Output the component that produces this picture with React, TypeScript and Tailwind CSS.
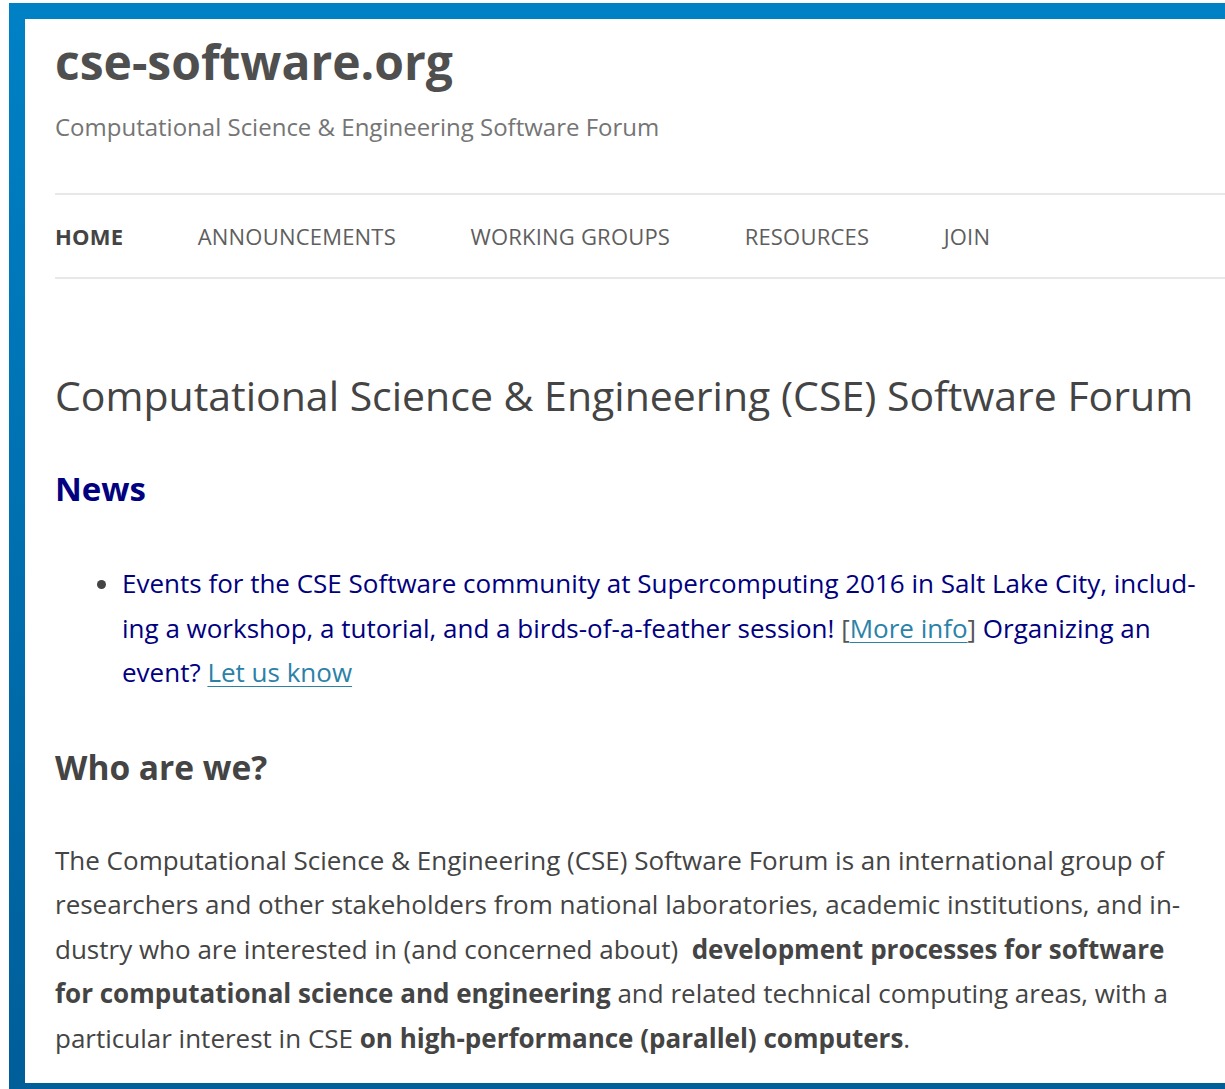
import React from "react";

const font = { fontFamily: '"Open Sans", "Noto Sans", sans-serif' };

function NavItem({ label, active }: { label: string; active?: boolean }) {
  return (
    <span
      className={
        active
          ? "text-[22px] font-bold text-[#444444] tracking-[0.2px]"
          : "text-[22px] text-[#5e5e5e] tracking-[0.2px]"
      }
    >
      {label}
    </span>
  );
}

export default function App() {
  return (
    <div className="h-[1089px] overflow-hidden bg-white pt-[3px] pl-[9px]" style={font}>
      <div className="h-[1086px] bg-gradient-to-b from-[#0081c6] to-[#005e99] pt-[16px] pl-[16px]">
        <div className="h-[1064px] overflow-hidden bg-white pl-[30px]">
          <header className="flex flex-col">
            <h1 className="mt-[14px] text-[48px] leading-[58px] font-bold text-[#4f4f4f] whitespace-nowrap">
              cse-software.org
            </h1>
            <p className="mt-[20px] text-[24px] leading-[32px] text-[#757575] whitespace-nowrap">
              Computational Science &amp; Engineering Software Forum
            </p>
          </header>

          <nav className="mt-[50px] border-y-2 border-[#e8e8e8] h-[86px] flex items-center gap-[74.5px] whitespace-nowrap">
            <NavItem label="HOME" active />
            <NavItem label="ANNOUNCEMENTS" />
            <NavItem label="WORKING GROUPS" />
            <NavItem label="RESOURCES" />
            <NavItem label="JOIN" />
          </nav>

          <main className="flex flex-col whitespace-nowrap">
            <h2 className="mt-[90px] text-[41px] leading-[52px] text-[#444444]">
              Computational Science &amp; Engineering (CSE) Software Forum
            </h2>

            <h3 className="mt-[47px] text-[33px] leading-[42px] font-bold text-[#000080]">News</h3>

            <ul className="mt-[51px] pl-[67px] list-disc marker:text-[#444444] text-[26px] leading-[44.5px] text-[#000080]">
              <li>
                Events for the CSE Software community at Supercomputing 2016 in Salt Lake City, includ-
                <br />
                ing a workshop, a tutorial, and a birds-of-a-feather session!{" "}
                <span className="text-[#555555]">[</span>
                <a href="#" className="text-[#2b82a8] underline underline-offset-[4px] decoration-1">
                  More info
                </a>
                <span className="text-[#555555]">]</span> Organizing an
                <br />
                event?{" "}
                <a href="#" className="text-[#2b82a8] underline underline-offset-[4px] decoration-1">
                  Let us know
                </a>
              </li>
            </ul>

            <h3 className="mt-[51px] text-[33.5px] leading-[42px] font-bold text-[#444444]">Who are we?</h3>

            <p className="mt-[50px] text-[26px] leading-[44.5px] text-[#444444]">
              The Computational Science &amp; Engineering (CSE) Software Forum is an international group of
              <br />
              researchers and other stakeholders from national laboratories, academic institutions, and in-
              <br />
              dustry who are interested in (and concerned about)&nbsp;{" "}
              <strong className="font-bold">development processes for software</strong>
              <br />
              <strong className="font-bold">for computational science and engineering</strong> and related technical
              computing areas, with a
              <br />
              particular interest in CSE <strong className="font-bold">on high-performance (parallel) computers</strong>.
            </p>
          </main>
        </div>
      </div>
    </div>
  );
}
